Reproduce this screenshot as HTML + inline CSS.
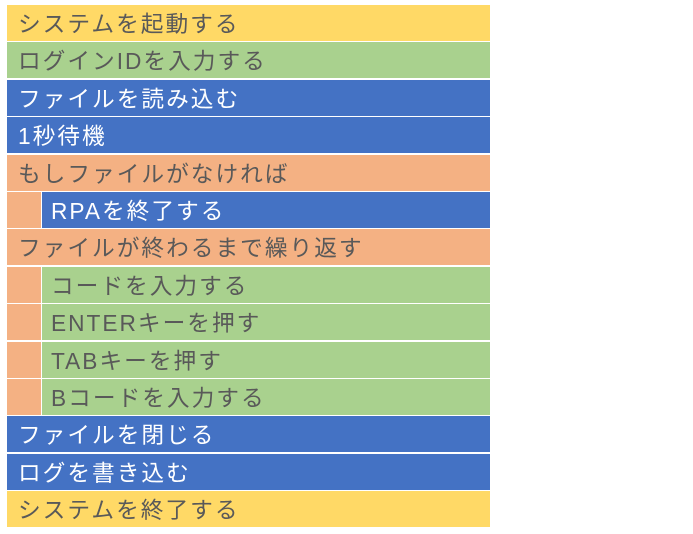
<!DOCTYPE html>
<html><head><meta charset="utf-8"><style>
html,body{margin:0;padding:0;background:#fff;width:693px;height:534px;overflow:hidden}
.r{position:absolute;left:7px;width:483px;height:36px;font-family:"Liberation Sans","Noto Sans CJK JP",sans-serif;font-size:22.7px;line-height:36px;color:#595959;white-space:nowrap;letter-spacing:2px}
.r span{position:absolute;left:11px;top:1px}
.y{background:#FFD966}.g{background:#A9D18E}.b{background:#4472C4;color:#fff}.o{background:#F4B183}
.in{background:#F4B183}
.in .c{position:absolute;left:34px;top:0;right:0;bottom:0;border-left:1px solid #fff}
.in span{left:44px}
</style></head><body>
<div class="r y" style="top:5px"><span>システムを起動する</span></div>
<div class="r g" style="top:42.4px"><span>ログインIDを入力する</span></div>
<div class="r b" style="top:79.8px"><span>ファイルを読み込む</span></div>
<div class="r b" style="top:117.2px"><span>1秒待機</span></div>
<div class="r o" style="top:154.6px"><span>もしファイルがなければ</span></div>
<div class="r in" style="top:192px;color:#fff"><div class="c" style="background:#4472C4"></div><span>RPAを終了する</span></div>
<div class="r o" style="top:229.4px"><span>ファイルが終わるまで繰り返す</span></div>
<div class="r in" style="top:266.8px"><div class="c" style="background:#A9D18E"></div><span>コードを入力する</span></div>
<div class="r in" style="top:304.2px"><div class="c" style="background:#A9D18E"></div><span>ENTERキーを押す</span></div>
<div class="r in" style="top:341.6px"><div class="c" style="background:#A9D18E"></div><span>TABキーを押す</span></div>
<div class="r in" style="top:379px"><div class="c" style="background:#A9D18E"></div><span>Bコードを入力する</span></div>
<div class="r b" style="top:416.4px"><span>ファイルを閉じる</span></div>
<div class="r b" style="top:453.8px"><span>ログを書き込む</span></div>
<div class="r y" style="top:491.2px"><span>システムを終了する</span></div>
</body></html>
